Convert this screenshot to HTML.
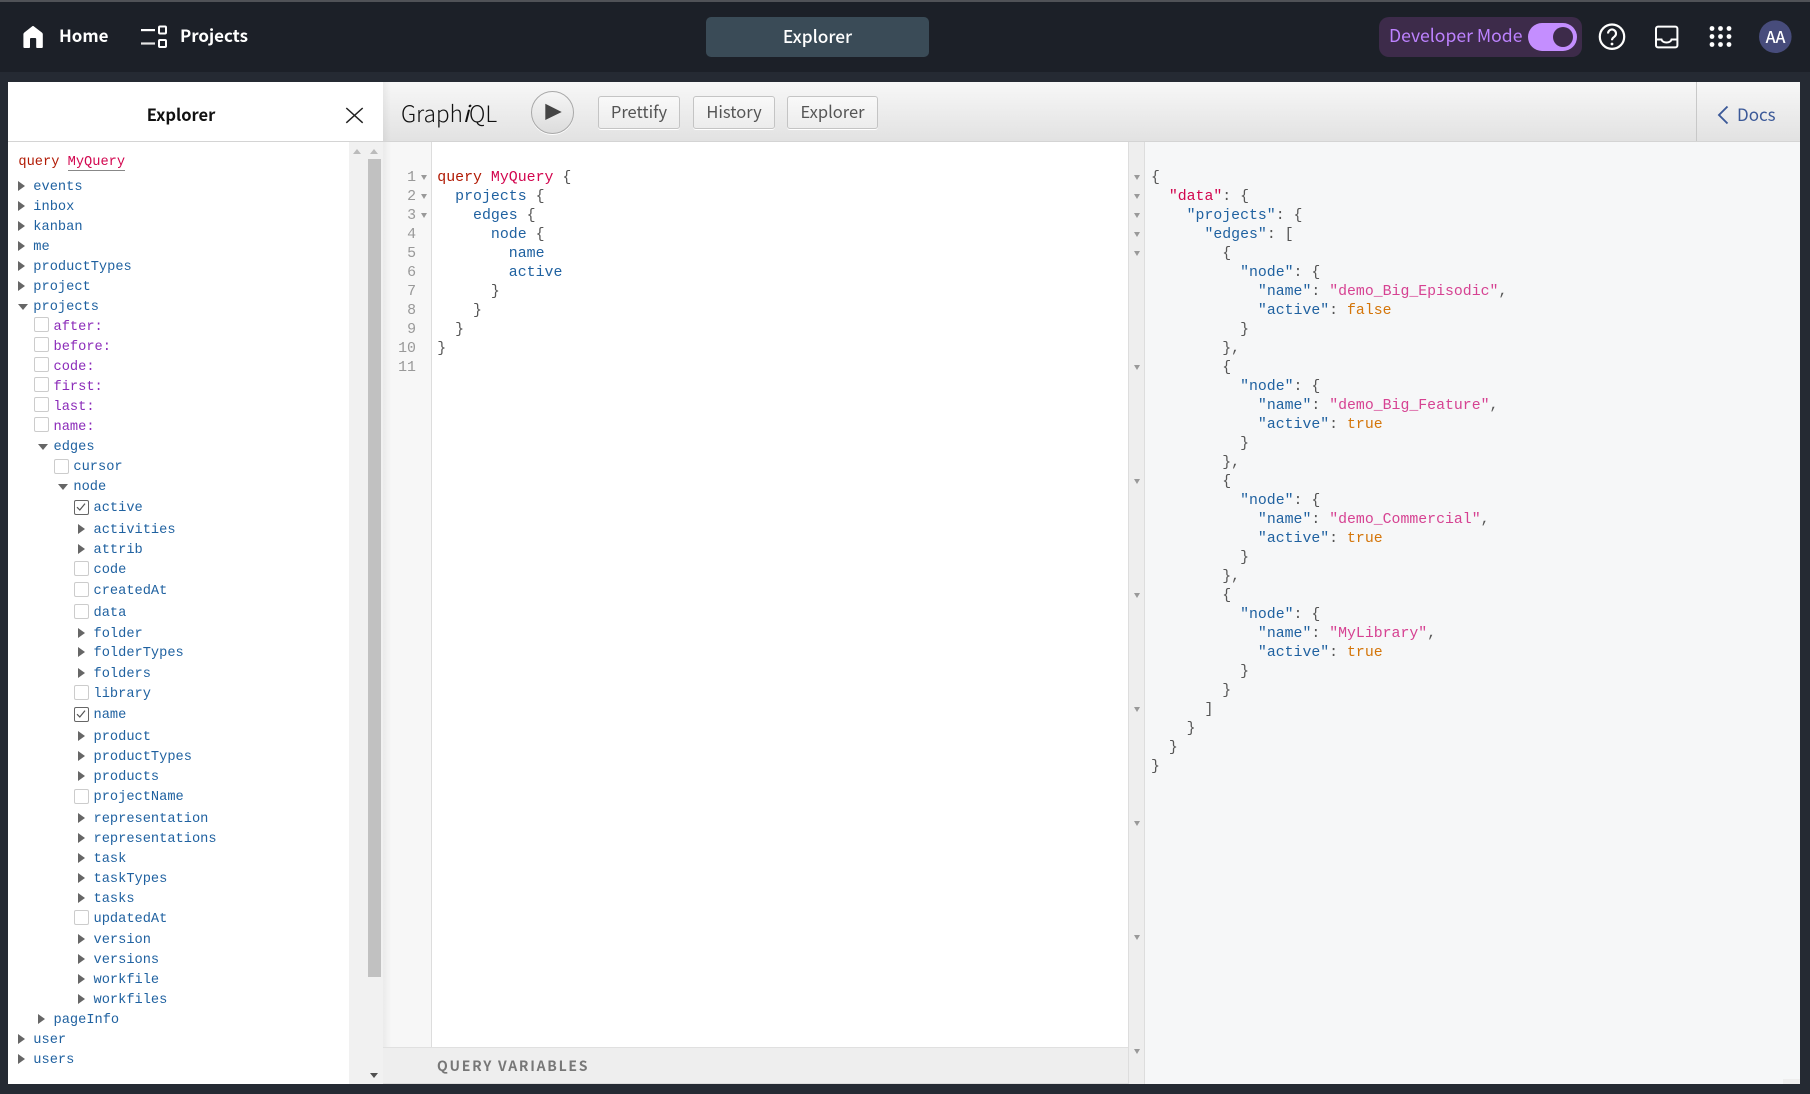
<!DOCTYPE html>
<html><head><meta charset="utf-8"><title>Explorer</title>
<style>
html,body{margin:0;padding:0;background:#252a33;width:1810px;height:1094px;overflow:hidden}
*{box-sizing:border-box}
.a{position:absolute}
#hdr{position:absolute;left:0;top:0;width:1810px;height:72px;background:#1c2028;border-top:2px solid #505257}
.s{font-family:"Noto Sans CJK JP","Liberation Sans",sans-serif}
.nav{position:absolute;color:#fff;font-size:16.9px;font-weight:700;line-height:24px;white-space:nowrap}
#ex{position:absolute;left:8px;top:82px;width:375px;height:59px;background:#fff}
#tree{position:absolute;left:8px;top:142px;width:341px;height:942px;background:#fff}
.m,.r{font-family:"Liberation Mono","DejaVu Sans Mono",monospace}
.r{position:absolute;font-size:13.68px;line-height:20px;height:20px;color:#1f61a0;white-space:pre}
.l0{left:33.3px}.l1{left:53.5px}.l2{left:73.4px}.l3{left:93.5px}
.g{color:#8b2bb9}
.ar,.ad{position:absolute;width:0;height:0;display:block}
.ar{left:-15.5px;top:3px;border-left:7.5px solid #666;border-top:5.5px solid transparent;border-bottom:5.5px solid transparent}
.ad{left:-15.5px;top:6px;border-top:6.5px solid #666;border-left:5.5px solid transparent;border-right:5.5px solid transparent}
.cb{position:absolute;left:-19.3px;top:1px;width:14.6px;height:14.6px;border:1.6px solid #ccc;border-radius:2px;background:#fff}
.cb.u{top:-1px}
.cb.z{top:0}
.cb.c{border-color:#666}
.cb svg{position:absolute;left:0;top:0}
.btn{position:absolute;top:96px;height:33px;border:1px solid #c4c4c4;border-radius:3px;background:linear-gradient(#f9f9f9,#ececec);box-shadow:0 1px 0 #fff;color:#555;font-size:16.5px;line-height:29px;text-align:center}
pre{margin:0;position:absolute;font-family:"Liberation Mono","DejaVu Sans Mono",monospace;font-size:14.9px;line-height:19px;color:#555}
.k{color:#b11a04}.d{color:#d2054e}.p{color:#1f61a0}.t{color:#d64292}.b{color:#d47509}
.f{position:absolute;width:0;height:0;border-top:5px solid #999;border-left:3.5px solid transparent;border-right:3.5px solid transparent}
.up{position:absolute;width:0;height:0;border-bottom:5px solid #bbb;border-left:4.5px solid transparent;border-right:4.5px solid transparent}
</style></head><body>
<div id="hdr"></div>

<svg class="a" style="left:0;top:0" width="180" height="72" viewBox="0 0 180 72">
<path d="M33 26 Q33.6 26 34.2 26.6 L42 32.6 Q42.8 33.2 42.8 34.2 V47 Q42.8 48 41.8 48 H37 Q36.2 48 36.2 47 V39 Q36.2 38 35.2 38 H31 Q30 38 30 39 V47 Q30 48 29.2 48 H24.4 Q23.4 48 23.4 47 V34.2 Q23.4 33.2 24.2 32.6 L31.8 26.6 Q32.4 26 33 26Z" fill="#fff"/>
<rect x="141" y="29" width="14" height="2.2" fill="#fff"/>
<rect x="141" y="42.4" width="14" height="2.2" fill="#e6e6e6"/>
<rect x="159" y="26.5" width="7" height="7" fill="none" stroke="#fff" stroke-width="2" rx="1"/>
<rect x="159" y="40" width="7" height="7" fill="none" stroke="#fff" stroke-width="2" rx="1"/>
</svg>
<div class="nav s" style="left:59px;top:23px">Home</div>
<div class="nav s" style="left:180px;top:23px">Projects</div>

<div class="a s" style="left:706px;top:17px;width:223px;height:40px;background:#3a4b57;border-radius:5px;color:#fff;font-size:17.3px;font-weight:500;line-height:38px;text-align:center">Explorer</div>

<div class="a" style="left:1379px;top:17px;width:203px;height:40px;background:#3d2b4a;border-radius:10px"></div>
<div class="a s" style="left:1389px;top:24px;color:#bd82ff;font-size:17.6px;line-height:24px;white-space:nowrap">Developer Mode</div>
<div class="a" style="left:1528px;top:23px;width:49px;height:28px;background:#c48eff;border-radius:14px"></div>
<div class="a" style="left:1553px;top:27px;width:20px;height:20px;background:#3d2b4a;border-radius:50%"></div>

<svg class="a" style="left:1590px;top:10px" width="210" height="54" viewBox="1590 10 210 54">
<circle cx="1612" cy="36.7" r="12.2" fill="none" stroke="#fff" stroke-width="2.2"/>
<path d="M1608 33.5 a4 4 0 1 1 6.4 3.2 c-1.5 1.1-2.4 1.8-2.4 3.6" fill="none" stroke="#fff" stroke-width="2.1"/>
<circle cx="1612" cy="44" r="1.4" fill="#fff"/>
<rect x="1656" y="26.6" width="21.4" height="20.8" rx="2" fill="none" stroke="#fff" stroke-width="2"/>
<path d="M1656 39.5 H1661.5 C1662.5 43.5 1670.5 43.5 1671.5 39.5 H1677" fill="none" stroke="#fff" stroke-width="2"/>
<g fill="#fff"><circle cx="1712" cy="28.5" r="2.4"/><circle cx="1720.5" cy="28.5" r="2.4"/><circle cx="1729" cy="28.5" r="2.4"/><circle cx="1712" cy="36.5" r="2.4"/><circle cx="1720.5" cy="36.5" r="2.4"/><circle cx="1729" cy="36.5" r="2.4"/><circle cx="1712" cy="44.5" r="2.4"/><circle cx="1720.5" cy="44.5" r="2.4"/><circle cx="1729" cy="44.5" r="2.4"/></g>
<circle cx="1775.3" cy="36.7" r="16.3" fill="#474c7b"/>
</svg>
<div class="a s" style="left:1759px;top:25px;width:33px;text-align:center;color:#fff;font-size:16px;font-weight:500;line-height:22px">AA</div>

<!-- explorer head -->
<div id="ex"></div>
<div class="a s" style="left:100px;top:102px;width:162px;text-align:center;font-size:16.5px;font-weight:700;color:#111;line-height:24px">Explorer</div>
<svg class="a" style="left:340px;top:100px" width="30" height="30" viewBox="0 0 30 30"><path d="M6.3 8 L22.7 22.8 M22.7 8 L6.3 22.8" stroke="#222" stroke-width="1.5" fill="none"/></svg>

<!-- toolbar -->
<div class="a" style="left:383px;top:82px;width:1417px;height:59px;background:linear-gradient(#f7f7f7,#e2e2e2)"></div>
<div class="a" style="left:8px;top:141px;width:1792px;height:1px;background:#d4d4d4"></div>
<div class="a s" style="left:401px;top:98px;font-size:22.5px;font-weight:300;color:#111;line-height:30px;white-space:nowrap">Graph<i style="font-weight:400">i</i>QL</div>
<div class="a" style="left:531px;top:91px;width:43px;height:43px;border-radius:50%;border:1px solid #a8a8a8;background:linear-gradient(#f6f6f6,#dcdcdc);box-shadow:0 1px 0 #fff"></div>
<svg class="a" style="left:540px;top:100px" width="26" height="24"><path d="M5.3 3.7 L21.7 12 L5.3 20Z" fill="#444"/></svg>
<div class="btn s" style="left:598px;width:82px">Prettify</div>
<div class="btn s" style="left:693px;width:82px">History</div>
<div class="btn s" style="left:787px;width:91px">Explorer</div>
<div class="a" style="left:1696px;top:82px;width:1px;height:59px;background:#c8c8c8"></div>
<svg class="a" style="left:1712px;top:100px" width="22" height="28"><path d="M15.5 6.5 L7 15 L15.5 23.5" stroke="#3b5998" stroke-width="1.9" fill="none"/></svg>
<div class="a s" style="left:1737px;top:100px;font-size:17px;color:#3b5998;line-height:28px">Docs</div>

<!-- editor area -->
<div class="a" style="left:383px;top:142px;width:49px;height:905px;background:#f7f7f7;border-right:1px solid #ddd"></div>
<div class="a" style="left:432px;top:142px;width:697px;height:905px;background:#fff"></div>
<div class="a" style="left:383px;top:142px;width:8px;height:942px;background:linear-gradient(90deg,rgba(0,0,0,.05),rgba(0,0,0,0))"></div>
<div class="a" style="left:383px;top:82px;width:8px;height:59px;background:linear-gradient(90deg,rgba(0,0,0,.05),rgba(0,0,0,0))"></div>
<div class="a" style="left:383px;top:1047px;width:746px;height:37px;background:#eee;border-top:1px solid #e0e0e0;border-bottom:1px solid #ddd"></div>
<div class="a s" style="left:437px;top:1055px;font-size:14px;font-weight:700;letter-spacing:1.75px;color:#777;line-height:22px;white-space:nowrap">QUERY VARIABLES</div>
<div class="a" style="left:1128px;top:142px;width:17px;height:942px;background:#eee;border-left:1px solid #ddd;border-right:1px solid #ddd"></div>
<div class="a" style="left:1145px;top:142px;width:655px;height:942px;background:#f6f7f8"></div>
<div class="a" style="left:1783px;top:1079px;width:17px;height:5px;background:#eee"></div>

<!-- line numbers -->
<pre style="left:383px;top:169px;width:33px;text-align:right;color:#999">1
2
3
4
5
6
7
8
9
10
11</pre>
<i class="f" style="left:421px;top:175px"></i><i class="f" style="left:421px;top:194px"></i><i class="f" style="left:421px;top:213px"></i>

<pre style="left:437.3px;top:169px"><span class="k">query</span> <span class="d">MyQuery</span> {
  <span class="p">projects</span> {
    <span class="p">edges</span> {
      <span class="p">node</span> {
        <span class="p">name</span>
        <span class="p">active</span>
      }
    }
  }
}</pre>

<!-- result -->
<i class="f" style="left:1133.5px;top:175px"></i><i class="f" style="left:1133.5px;top:194px"></i><i class="f" style="left:1133.5px;top:213px"></i><i class="f" style="left:1133.5px;top:232px"></i><i class="f" style="left:1133.5px;top:251px"></i><i class="f" style="left:1133.5px;top:365px"></i><i class="f" style="left:1133.5px;top:479px"></i><i class="f" style="left:1133.5px;top:593px"></i><i class="f" style="left:1133.5px;top:707px"></i><i class="f" style="left:1133.5px;top:821px"></i><i class="f" style="left:1133.5px;top:935px"></i><i class="f" style="left:1133.5px;top:1049px"></i>
<pre style="left:1151px;top:169px;font-size:14.85px">{
  <span class="d">"data"</span>: {
    <span class="p">"projects"</span>: {
      <span class="p">"edges"</span>: [
        {
          <span class="p">"node"</span>: {
            <span class="p">"name"</span>: <span class="t">"demo_Big_Episodic"</span>,
            <span class="p">"active"</span>: <span class="b">false</span>
          }
        },
        {
          <span class="p">"node"</span>: {
            <span class="p">"name"</span>: <span class="t">"demo_Big_Feature"</span>,
            <span class="p">"active"</span>: <span class="b">true</span>
          }
        },
        {
          <span class="p">"node"</span>: {
            <span class="p">"name"</span>: <span class="t">"demo_Commercial"</span>,
            <span class="p">"active"</span>: <span class="b">true</span>
          }
        },
        {
          <span class="p">"node"</span>: {
            <span class="p">"name"</span>: <span class="t">"MyLibrary"</span>,
            <span class="p">"active"</span>: <span class="b">true</span>
          }
        }
      ]
    }
  }
}</pre>

<!-- explorer tree -->
<div id="tree"></div>
<div class="a" style="left:349px;top:142px;width:34px;height:942px;background:#f1f1f1"></div>
<div class="a" style="left:368px;top:159px;width:13px;height:818px;background:#c1c1c1"></div>
<i class="up" style="left:352.5px;top:149px"></i><i class="up" style="left:370px;top:149px"></i>
<i class="f" style="left:370px;top:1073px;border-top-color:#505050;border-left-width:4px;border-right-width:4px"></i>

<div class="a" style="left:0;top:2px;width:349px;height:1080px">
<div class="r" style="left:18.4px;top:151px"><span class="k">query</span> <span class="d" style="border-bottom:1px solid #888">MyQuery</span></div>
<div class="r l0" style="top:176px"><i class="ar"></i>events</div>
<div class="r l0" style="top:196px"><i class="ar"></i>inbox</div>
<div class="r l0" style="top:216px"><i class="ar"></i>kanban</div>
<div class="r l0" style="top:236px"><i class="ar"></i>me</div>
<div class="r l0" style="top:256px"><i class="ar"></i>productTypes</div>
<div class="r l0" style="top:276px"><i class="ar"></i>project</div>
<div class="r l0" style="top:296px"><i class="ad"></i>projects</div>
<div class="r l1 g" style="top:316px"><i class="cb u"></i>after:</div>
<div class="r l1 g" style="top:336px"><i class="cb u"></i>before:</div>
<div class="r l1 g" style="top:356px"><i class="cb u"></i>code:</div>
<div class="r l1 g" style="top:376px"><i class="cb u"></i>first:</div>
<div class="r l1 g" style="top:396px"><i class="cb u"></i>last:</div>
<div class="r l1 g" style="top:416px"><i class="cb u"></i>name:</div>
<div class="r l1" style="top:436px"><i class="ad"></i>edges</div>
<div class="r l2" style="top:456px"><i class="cb"></i>cursor</div>
<div class="r l2" style="top:476px"><i class="ad"></i>node</div>
<div class="r l3" style="top:497px"><i class="cb c"><svg width="12" height="12"><path d="M2 6.2 L4.8 9 L10 2.6" stroke="#555" stroke-width="1.2" fill="none"/></svg></i>active</div>
<div class="r l3" style="top:519px"><i class="ar"></i>activities</div>
<div class="r l3" style="top:539px"><i class="ar"></i>attrib</div>
<div class="r l3" style="top:559px"><i class="cb z"></i>code</div>
<div class="r l3" style="top:580px"><i class="cb z"></i>createdAt</div>
<div class="r l3" style="top:602px"><i class="cb z"></i>data</div>
<div class="r l3" style="top:623px"><i class="ar"></i>folder</div>
<div class="r l3" style="top:642px"><i class="ar"></i>folderTypes</div>
<div class="r l3" style="top:663px"><i class="ar"></i>folders</div>
<div class="r l3" style="top:683px"><i class="cb z"></i>library</div>
<div class="r l3" style="top:704px"><i class="cb c"><svg width="12" height="12"><path d="M2 6.2 L4.8 9 L10 2.6" stroke="#555" stroke-width="1.2" fill="none"/></svg></i>name</div>
<div class="r l3" style="top:726px"><i class="ar"></i>product</div>
<div class="r l3" style="top:746px"><i class="ar"></i>productTypes</div>
<div class="r l3" style="top:766px"><i class="ar"></i>products</div>
<div class="r l3" style="top:786px"><i class="cb"></i>projectName</div>
<div class="r l3" style="top:808px"><i class="ar"></i>representation</div>
<div class="r l3" style="top:828px"><i class="ar"></i>representations</div>
<div class="r l3" style="top:848px"><i class="ar"></i>task</div>
<div class="r l3" style="top:868px"><i class="ar"></i>taskTypes</div>
<div class="r l3" style="top:888px"><i class="ar"></i>tasks</div>
<div class="r l3" style="top:908px"><i class="cb z"></i>updatedAt</div>
<div class="r l3" style="top:929px"><i class="ar"></i>version</div>
<div class="r l3" style="top:949px"><i class="ar"></i>versions</div>
<div class="r l3" style="top:969px"><i class="ar"></i>workfile</div>
<div class="r l3" style="top:989px"><i class="ar"></i>workfiles</div>
<div class="r l1" style="top:1009px"><i class="ar"></i>pageInfo</div>
<div class="r l0" style="top:1029px"><i class="ar"></i>user</div>
<div class="r l0" style="top:1049px"><i class="ar"></i>users</div>
</div>
</body></html>
